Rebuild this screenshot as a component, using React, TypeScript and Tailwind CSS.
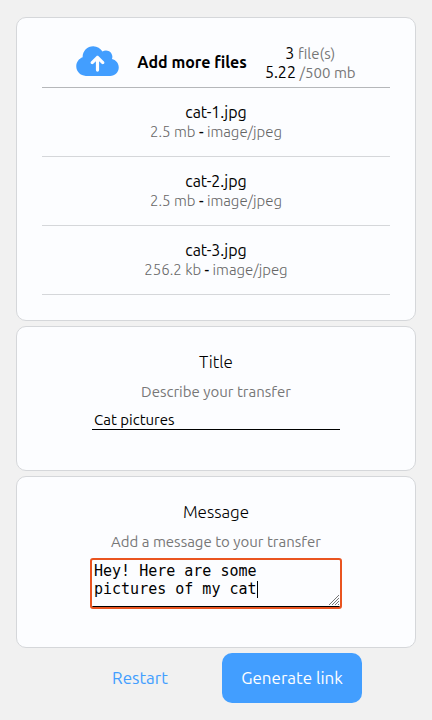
import { useState } from "react";
import type { ReactNode } from "react";
import { FaCloudArrowUp } from "react-icons/fa6";

type TransferFile = { name: string; size: string; type: string };

const files: TransferFile[] = [
  { name: "cat-1.jpg", size: "2.5 mb", type: "image/jpeg" },
  { name: "cat-2.jpg", size: "2.5 mb", type: "image/jpeg" },
  { name: "cat-3.jpg", size: "256.2 kb", type: "image/jpeg" },
];

function Card({ children }: { children: ReactNode }) {
  return (
    <section className="rounded-[10px] border border-[#d5d7da] bg-[#fcfdff] p-[25px] text-center">
      {children}
    </section>
  );
}

function FileRow({ file }: { file: TransferFile }) {
  return (
    <li className="border-b border-[#d5d7da] py-3.5">
      <p className="text-base leading-5">{file.name}</p>
      <p className="text-[15px] leading-5 font-light text-[#666]">
        {file.size} <span className="font-medium text-black">-</span> {file.type}
      </p>
    </li>
  );
}

export default function App() {
  const [title, setTitle] = useState("Cat pictures");
  const [message, setMessage] = useState("Hey! Here are some pictures of my cat");

  return (
    <main className="min-h-screen bg-[#f1f1f1] px-4 pt-[17px] pb-4 font-[Ubuntu,'Noto_Sans',sans-serif] text-black">
      <div className="flex flex-col gap-[5px]">
        <Card>
          <header className="flex h-[45px] items-start justify-center gap-[18px] border-b border-[#b5b7ba]">
            <button type="button" className="flex h-[35px] items-center gap-[18px]">
              <FaCloudArrowUp className="h-[34px] w-[43px] text-[#429eff]" />
              <span className="pt-0.5 text-base leading-5 font-bold">Add more files</span>
            </button>
            <div className="pt-px text-base leading-[19px]">
              <p>
                3 <span className="text-[15px] leading-[18px] text-[#777]">file(s)</span>
              </p>
              <p>
                5.22 <span className="text-[15px] leading-[18px] text-[#777]">/500 mb</span>
              </p>
            </div>
          </header>
          <ul>
            {files.map((file) => (
              <FileRow key={file.name} file={file} />
            ))}
          </ul>
        </Card>

        <Card>
          <label htmlFor="title" className="block text-[17px] leading-5 font-light">
            Title
          </label>
          <p id="title-hint" className="mt-2.5 text-[15px] leading-5 text-[#777]">
            Describe your transfer
          </p>
          <input
            id="title"
            type="text"
            aria-describedby="title-hint"
            value={title}
            onChange={(e) => setTitle(e.target.value)}
            className="mx-auto mt-2 mb-[15px] block h-5 w-[248px] border-b border-black bg-transparent px-0.5 text-[15px] leading-5 outline-none"
          />
        </Card>

        <Card>
          <label htmlFor="message" className="block text-[17px] leading-5 font-light">
            Message
          </label>
          <p id="message-hint" className="mt-2.5 text-[15px] leading-5 text-[#777]">
            Add a message to your transfer
          </p>
          <div className="relative mx-auto mt-2 mb-[15px] w-[248px]">
            <textarea
              id="message"
              aria-describedby="message-hint"
              value={message}
              onChange={(e) => setMessage(e.target.value)}
              className="block h-[47px] w-full resize-none overflow-hidden rounded-[1px] border-b border-black bg-[#fcfdff] py-0.5 pr-[60px] pl-0.5 font-['DejaVu_Sans_Mono',monospace] text-[15px] leading-[18px] caret-transparent outline-2 outline-[#e95420]"
            />
            <span className="pointer-events-none absolute top-[21px] left-[165px] h-[17px] w-px bg-black" />
            <svg
              className="pointer-events-none absolute right-px bottom-0.5 h-2.5 w-2.5"
              viewBox="0 0 10 10"
              fill="none"
              stroke="#777"
              aria-hidden="true"
            >
              <path d="M0 10 10 0M3 10 10 3M6 10 10 6M9 10 10 9" />
            </svg>
          </div>
        </Card>

        <div className="flex justify-center gap-3">
          <button type="button" className="h-[50px] w-[140px] rounded-[10px] text-[17px] text-[#429eff]">
            Restart
          </button>
          <button type="button" className="h-[50px] w-[140px] rounded-[10px] bg-[#429eff] text-[17px] text-white">
            Generate link
          </button>
        </div>
      </div>
    </main>
  );
}
